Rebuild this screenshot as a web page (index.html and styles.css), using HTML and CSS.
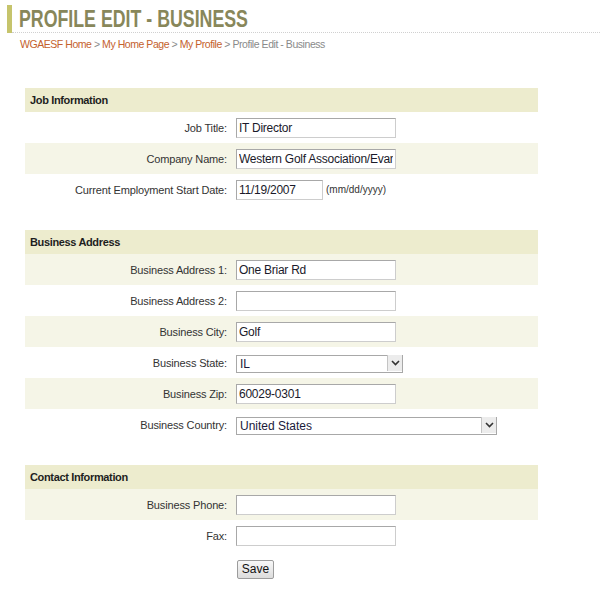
FILE: index.html
```html
<!DOCTYPE html>
<html>
<head>
<meta charset="utf-8">
<title>Profile Edit - Business</title>
<link rel="stylesheet" href="styles.css">
</head>
<body>
<div class="page-title"><h1><span class="title-text">PROFILE EDIT - BUSINESS</span></h1></div>
<div class="crumbs">
  <a href="#">WGAESF Home</a> &gt; <a href="#">My Home Page</a> &gt; <a href="#">My Profile</a> &gt; <span>Profile Edit - Business</span>
</div>

<form class="form">
  <section class="section">
    <div class="section-head">Job Information</div>
    <div class="row"><label>Job Title:</label><div class="field"><input class="text" value="IT Director"></div></div>
    <div class="row alt"><label>Company Name:</label><div class="field"><input class="text" value="Western Golf Association/Evans Scholars Foundation"></div></div>
    <div class="row"><label>Current Employment Start Date:</label><div class="field"><input class="text date" value="11/19/2007"><span class="hint">(mm/dd/yyyy)</span></div></div>
  </section>

  <section class="section">
    <div class="section-head">Business Address</div>
    <div class="row alt"><label>Business Address 1:</label><div class="field"><input class="text" value="One Briar Rd"></div></div>
    <div class="row"><label>Business Address 2:</label><div class="field"><input class="text" value=""></div></div>
    <div class="row alt"><label>Business City:</label><div class="field"><input class="text" value="Golf"></div></div>
    <div class="row"><label>Business State:</label><div class="field">
      <div class="select state"><select><option>IL</option></select><span class="arrow"><svg width="9" height="6" viewBox="0 0 9 6"><path d="M1 1 L4.5 4.5 L8 1" fill="none" stroke="#333" stroke-width="1.6"/></svg></span></div>
    </div></div>
    <div class="row alt"><label>Business Zip:</label><div class="field"><input class="text" value="60029-0301"></div></div>
    <div class="row"><label>Business Country:</label><div class="field">
      <div class="select country"><select><option>United States</option></select><span class="arrow"><svg width="9" height="6" viewBox="0 0 9 6"><path d="M1 1 L4.5 4.5 L8 1" fill="none" stroke="#333" stroke-width="1.6"/></svg></span></div>
    </div></div>
  </section>

  <section class="section">
    <div class="section-head">Contact Information</div>
    <div class="row alt"><label>Business Phone:</label><div class="field"><input class="text" value=""></div></div>
    <div class="row"><label>Fax:</label><div class="field"><input class="text" value=""></div></div>
    <div class="row"><span></span><div class="field"><button type="button" class="save">Save</button></div></div>
  </section>
</form>
</body>
</html>
```

FILE: styles.css
```css
html, body {
  margin: 0;
  padding: 0;
  background: #fff;
}
body {
  font-family: Arial, "Liberation Sans", sans-serif;
  color: #333;
  width: 600px;
}
.page-title {
  margin: 5px 0 0 7px;
  border-left: 5px solid #c6c46c;
}
.page-title h1 {
  margin: 0;
  padding-left: 7px;
  height: 27px;
  line-height: 28px;
  font-family: "Liberation Sans", Arial, sans-serif;
  font-weight: bold;
  font-size: 24px;
  color: #88875a;
  border-bottom: 1px dotted #d0d0d0;
  overflow: hidden;
  white-space: nowrap;
}
.title-text {
  display: inline-block;
  transform: scaleX(0.74);
  transform-origin: left center;
}
.crumbs {
  margin: 4px 0 0 20px;
  font-size: 10.5px;
  letter-spacing: -0.45px;
  line-height: 14px;
  color: #8a8a8a;
}
.crumbs a {
  color: #c4612d;
  text-decoration: none;
}
.form {
  margin: 37px 0 0 25px;
  width: 513px;
}
.section {
  margin-bottom: 25px;
}
.section-head {
  height: 24px;
  line-height: 24px;
  padding-left: 5px;
  background: #edecce;
  font-size: 11px;
  letter-spacing: -0.35px;
  font-weight: bold;
  color: #1e1e1e;
}
.row {
  display: grid;
  grid-template-columns: 202px 1fr;
  column-gap: 9px;
  align-items: center;
  height: 31px;
}
.row.alt {
  background: #f5f5e7;
}
.row label {
  text-align: right;
  font-size: 11px;
  letter-spacing: -0.15px;
  color: #333;
}
.field {
  display: flex;
  align-items: center;
}
.text {
  box-sizing: border-box;
  width: 160px;
  height: 20px;
  margin: 0;
  padding: 0 2px;
  border: 1px solid #a8a8a8;
  border-right-color: #cdcdcd;
  border-bottom-color: #cdcdcd;
  font-family: Arial, "Liberation Sans", sans-serif;
  font-size: 12px;
  letter-spacing: -0.25px;
  color: #1a1a2a;
  background: #fff;
  overflow: hidden;
}
.text.date {
  width: 87px;
}
.hint {
  margin-left: 3px;
  font-size: 10px;
  color: #333;
}
.select {
  position: relative;
  height: 18px;
}
.select.state { width: 167px; }
.select.country { width: 261px; }
.select select {
  -webkit-appearance: none;
  appearance: none;
  box-sizing: border-box;
  width: 100%;
  height: 18px;
  margin: 0;
  padding: 0 0 0 3px;
  border: 1px solid #a8a8a8;
  border-radius: 0;
  background: #fff;
  font-family: Arial, "Liberation Sans", sans-serif;
  font-size: 12px;
  line-height: 16px;
  color: #1a1a3a;
}
.select .arrow {
  position: absolute;
  top: 1px;
  right: 1px;
  width: 15px;
  height: 16px;
  box-sizing: border-box;
  border-left: 1px solid #c4c4c4;
  background: #ececec;
  display: flex;
  align-items: center;
  justify-content: center;
}
.save {
  margin: 5px 0 0 1px;
  height: 19px;
  width: 37px;
  padding: 0;
  border: 1px solid #9c9c9c;
  border-radius: 2px;
  background: linear-gradient(#f8f8f8, #dcdcdc);
  font-family: Arial, "Liberation Sans", sans-serif;
  font-size: 12px;
  color: #111;
}
```
